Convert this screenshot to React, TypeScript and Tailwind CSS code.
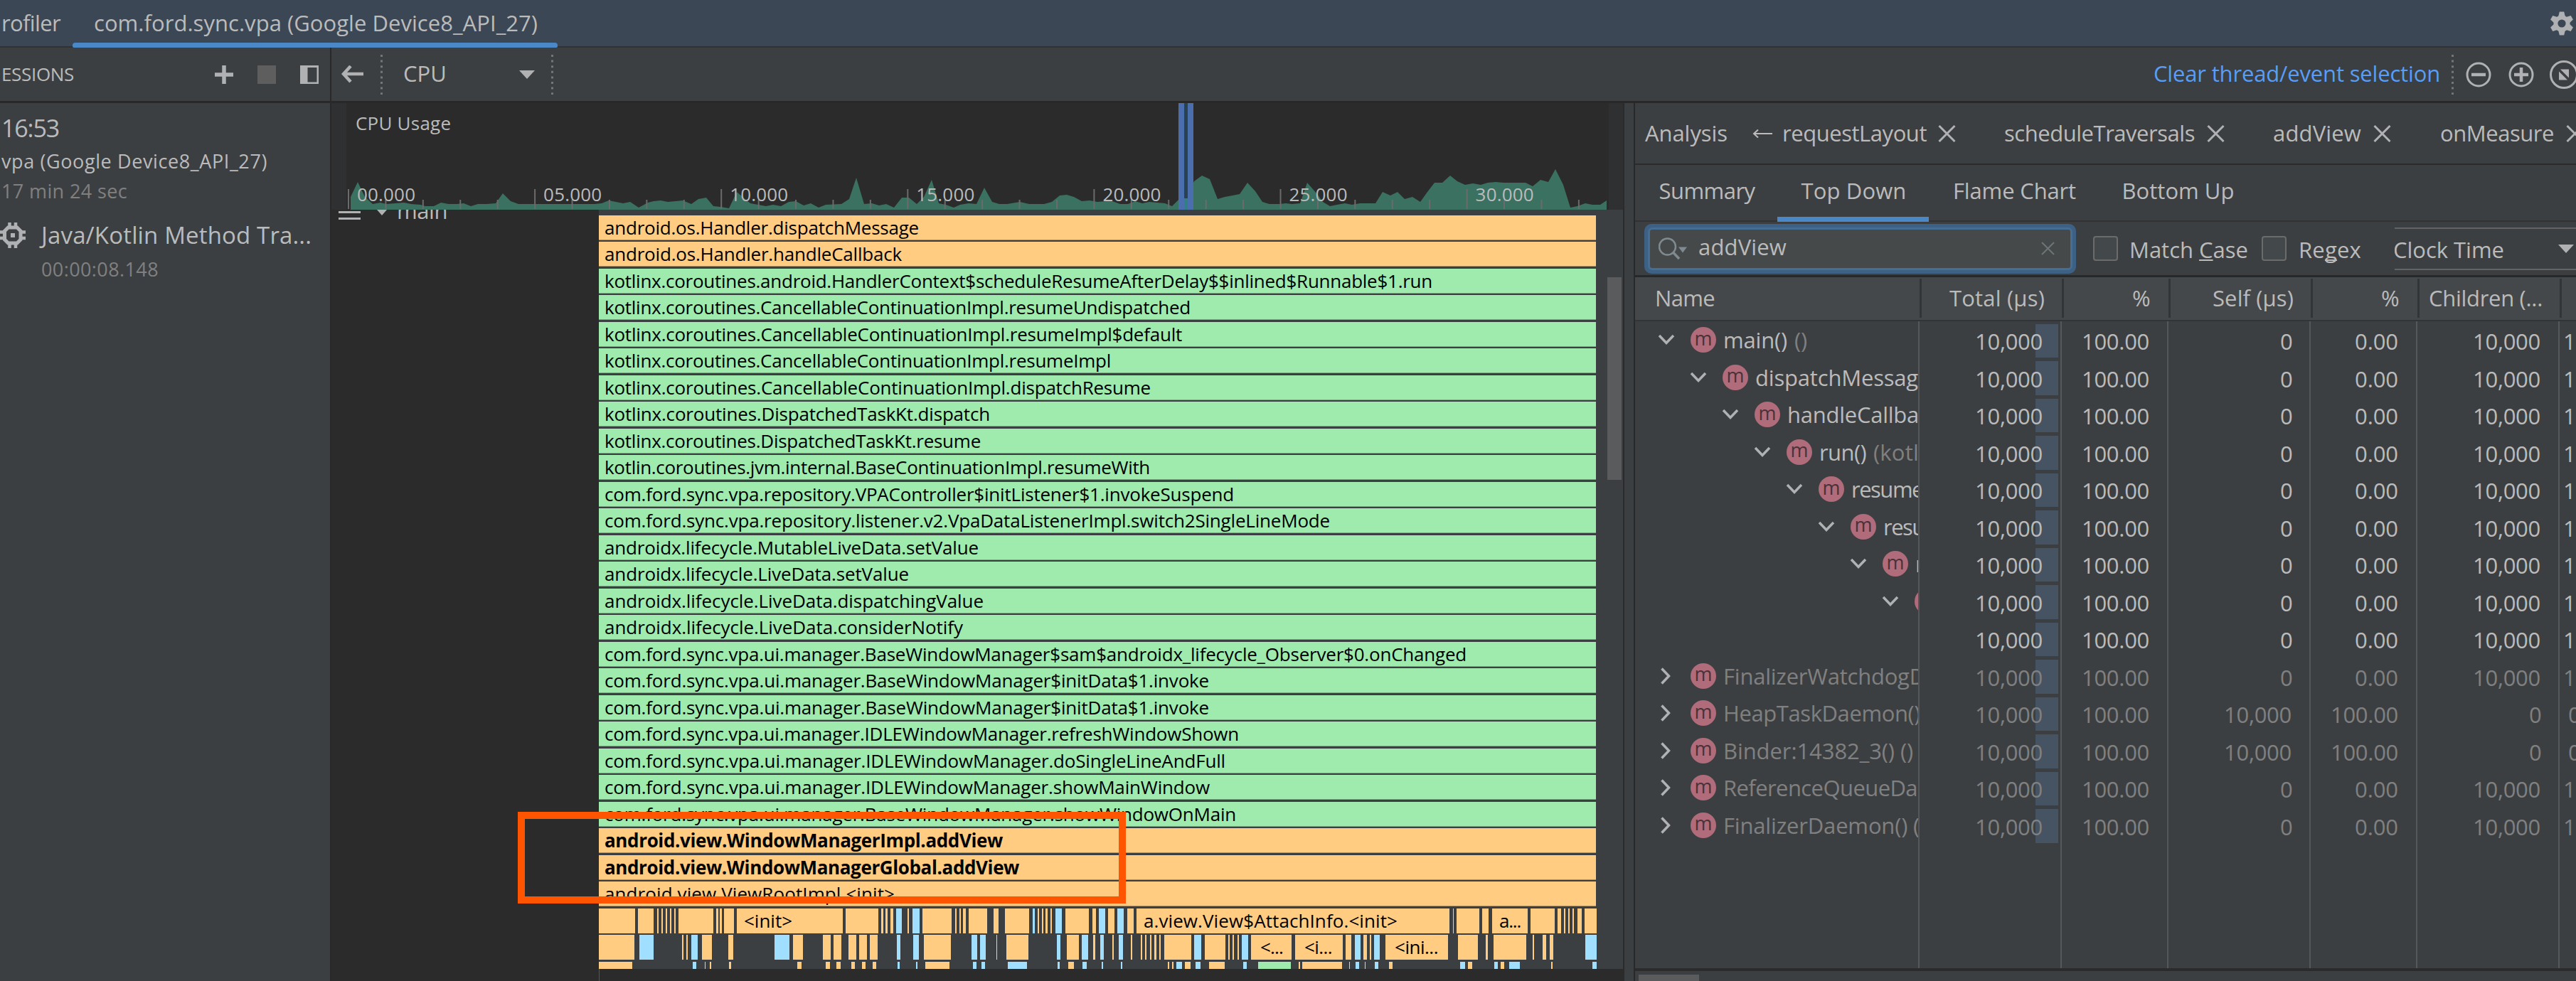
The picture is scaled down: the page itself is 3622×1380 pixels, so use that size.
import React, { useLayoutEffect, useRef } from "react";

interface FitTextProps {
  width: number;
  className?: string;
  children: React.ReactNode;
}

// Single line of text tracked so that it takes exactly `width` pixels
const FitText = ({ width, className = "", children }: FitTextProps) => {
  const ref = useRef<HTMLSpanElement>(null);

  useLayoutEffect(() => {
    const el = ref.current;
    if (!el) return;
    el.style.letterSpacing = "0px";
    const natural = el.getBoundingClientRect().width;
    const count = el.textContent?.length || 1;
    el.style.letterSpacing = `${(width - 2 - natural) / count}px`;
  }, [width, children]);

  return (
    <div className={`shrink-0 whitespace-pre ${className}`} style={{ width }}>
      <span ref={ref} className="ml-0.5 inline-block">
        {children}
      </span>
    </div>
  );
};

/* ---------- icons ---------- */

const CloseIcon = ({ className = "" }: { className?: string }) => (
  <svg viewBox="0 0 25 24" className={`h-6 w-[25px] shrink-0 ${className}`}>
    <path d="M1.5 1L23.5 23M23.5 1L1.5 23" stroke="#afb1b3" strokeWidth="3" />
  </svg>
);

const DottedDivider = ({ className = "" }: { className?: string }) => (
  <svg viewBox="0 0 3 56" className={`h-14 w-[3px] shrink-0 ${className}`}>
    <path d="M1.5 0V56" stroke="#747678" strokeWidth="3" strokeDasharray="3 4.6" />
  </svg>
);

const Triangle = ({ className = "" }: { className?: string }) => (
  <svg viewBox="0 0 22 12" className={`h-3 w-[22px] shrink-0 ${className}`}>
    <path d="M0 0H22L11 12Z" fill="#afb1b3" />
  </svg>
);

const GearIcon = () => (
  <svg viewBox="-17 -17 34 34" className="ml-auto mr-[3px] h-[34px] w-[34px] shrink-0">
    <g fill="#afb1b3">
      {[0, 60, 120].map((a) => (
        <path key={a} d="M-3.2 -16.5H3.2L5 -9V9L3.2 16.5H-3.2L-5 9V-9Z" transform={`rotate(${a})`} />
      ))}
      <circle r="11.5" />
    </g>
    <circle r="5.6" fill="#3c4755" />
  </svg>
);

const ChipIcon = () => (
  <svg viewBox="0 0 36 36" className="h-9 w-9 shrink-0">
    <g fill="none" stroke="#afb1b3">
      <path d="M13.500 0V8M22 0V8M13.500 28V36M22 28V36M28 13.500H36M28 22H36M0 13.500H8M0 22H8" strokeWidth="4.500" />
      <path d="M11.500 7H24L29 12V24L24 29H11.500L6.500 24V12Z" strokeWidth="5" />
    </g>
    <rect x="15" y="15" width="6" height="6" fill="#afb1b3" />
  </svg>
);

const MethodIcon = () => (
  <div className="flex h-9 w-9 shrink-0 items-center justify-center rounded-full bg-[#b06c7a] pb-1.5 text-[27px] leading-none text-[#4a3238]">
    m
  </div>
);

const Chevron = ({ open }: { open: boolean }) => (
  <svg viewBox="0 0 24 24" className="h-6 w-6 shrink-0">
    <path
      d={open ? "M2 6L12 16.500L22 6" : "M5.500 1.500L15.500 12L5.500 22.500"}
      fill="none"
      stroke="#afb1b3"
      strokeWidth="3.500"
    />
  </svg>
);

/* ---------- sessions ---------- */

const Sessions = () => (
  <div className="flex w-[466px] shrink-0 flex-col border-r-2 border-[#292929] bg-[#3c3f41]">
    <div className="flex h-[78px] items-center border-b-[3px] border-[#282828]">
      <FitText width={104} className="text-[26px]">ESSIONS</FitText>
      <svg viewBox="0 0 26 26" className="ml-[198px] size-[26px]">
        <path d="M13 0V26M0 13H26" stroke="#afb1b3" strokeWidth="5.500" />
      </svg>
      <div className="ml-[34px] size-[26px] bg-[#5e5e5e]" />
      <svg viewBox="0 0 26 26" className="ml-[34px] size-[26px]">
        <path d="M0 0H26V26H0ZM10.500 3V23.500H23.500V3Z" fill="#afb1b3" fillRule="evenodd" />
      </svg>
    </div>
    <div className="pt-[15px]">
      <FitText width={83} className="text-[34px] leading-10">16:53</FitText>
      <FitText width={376} className="mt-[9px] text-[27px] leading-9">vpa (Google Device8_API_27)</FitText>
      <FitText width={179} className="mt-1.5 text-[27px] leading-9 text-[#808080]">17 min 24 sec</FitText>
      <div className="mt-[23px] flex h-[42px] items-center">
        <ChipIcon />
        <FitText width={382} className="ml-5 text-[33px]">Java/Kotlin Method Tra...</FitText>
      </div>
      <FitText width={167} className="ml-[56px] mt-[9px] text-[27px] leading-9 text-[#808080]">
        00:00:08.148
      </FitText>
    </div>
  </div>
);

/* ---------- cpu usage chart ---------- */

const usage =
  "493,277 503,256 513,277 524,287 535,285 543,287 568,285 578,287 591,288 598,290 610,290 620,285 631,287 642,287 652,286 662,290 672,287 684,287 697,286 707,272 718,283 729,287 836,287 846,286 856,282 866,284 876,286 886,284 898,292 911,285 919,283 929,282 939,284 960,282 972,287 982,280 993,278 1003,290 1013,291 1025,293 1036,270 1044,277 1055,286 1066,288 1077,290 1087,288 1098,290 1109,284 1119,283 1130,289 1140,286 1151,292 1161,288 1183,287 1194,280 1204,250 1215,287 1226,286 1236,289 1246,287 1257,292 1268,278 1278,278 1289,287 1299,277 1310,253 1320,286 1330,288 1341,292 1350,288 1362,286 1373,287 1384,264 1395,284 1405,287 1416,287 1434,284 1447,287 1468,287 1479,284 1490,275 1500,274 1510,277 1521,283 1532,282 1543,284 1555,283 1564,283 1575,287 1586,287 1596,283 1606,286 1616,284 1638,286 1648,290 1658,280 1668,278 1679,255 1690,247 1701,252 1712,280 1722,277 1733,275 1743,273 1754,257 1765,269 1775,284 1785,287 1799,287 1808,286 1817,287 1828,286 1838,257 1852,273 1860,284 1870,290 1880,288 1891,286 1901,288 1912,286 1934,286 1944,270 1955,275 1965,270 1975,280 1986,277 1997,284 2007,270 2017,257 2028,257 2039,247 2049,255 2060,260 2071,258 2082,260 2092,257 2103,256 2114,257 2145,257 2155,262 2166,253 2177,256 2187,238 2198,260 2208,292 2218,290 2229,286 2239,288 2250,288 2259,282";

const seconds = ["00.000", "05.000", "10.000", "15.000", "20.000", "25.000", "30.000"];

const CpuUsage = () => (
  <div className="flex h-[150px] bg-[#2b2b2b]">
    <div className="w-[21px] bg-[#2f3032]" />
    <svg viewBox="487 145 1775 150" className="h-[150px] w-[1775px]">
      <polygon points={`493,295 ${usage} 2259,295`} fill="#3b7160" />
      {Array.from({ length: 34 }, (_, i) => (
        <rect key={i} x={489 + i * 52.42} y={i % 5 ? 281 : 266} width="2" height={i % 5 ? 13 : 28} fill="#6b6b6b" />
      ))}
      <g fill="#bbbbbb" fontSize="26">
        <text x="500" y="182.500" textLength="134">CPU Usage</text>
        {seconds.map((s, i) => (
          <text key={s} x={502 + i * 262.1} y="283" textLength="82">{s}</text>
        ))}
      </g>
      <rect x="1657" y="145" width="21" height="150" fill="#4b6eaf" />
      <rect x="1665" y="145" width="5" height="134" fill="#29434e" />
      <rect x="1665" y="279" width="5" height="16" fill="#327f86" />
    </svg>
    <div className="w-5 bg-[#2f3032]" />
  </div>
);

/* ---------- call chart ---------- */

const calls: [string, number, string?][] = [
  ["android.os.Handler.dispatchMessage", 443, "o"],
  ["android.os.Handler.handleCallback", 419, "o"],
  ["kotlinx.coroutines.android.HandlerContext$scheduleResumeAfterDelay$$inlined$Runnable$1.run", 1165],
  ["kotlinx.coroutines.CancellableContinuationImpl.resumeUndispatched", 825],
  ["kotlinx.coroutines.CancellableContinuationImpl.resumeImpl$default", 813],
  ["kotlinx.coroutines.CancellableContinuationImpl.resumeImpl", 713],
  ["kotlinx.coroutines.CancellableContinuationImpl.dispatchResume", 769],
  ["kotlinx.coroutines.DispatchedTaskKt.dispatch", 543],
  ["kotlinx.coroutines.DispatchedTaskKt.resume", 530],
  ["kotlin.coroutines.jvm.internal.BaseContinuationImpl.resumeWith", 768],
  ["com.ford.sync.vpa.repository.VPAController$initListener$1.invokeSuspend", 886],
  ["com.ford.sync.vpa.repository.listener.v2.VpaDataListenerImpl.switch2SingleLineMode", 1021],
  ["androidx.lifecycle.MutableLiveData.setValue", 527],
  ["androidx.lifecycle.LiveData.setValue", 429],
  ["androidx.lifecycle.LiveData.dispatchingValue", 534],
  ["androidx.lifecycle.LiveData.considerNotify", 505],
  ["com.ford.sync.vpa.ui.manager.BaseWindowManager$sam$androidx_lifecycle_Observer$0.onChanged", 1213],
  ["com.ford.sync.vpa.ui.manager.BaseWindowManager$initData$1.invoke", 851],
  ["com.ford.sync.vpa.ui.manager.BaseWindowManager$initData$1.invoke", 851],
  ["com.ford.sync.vpa.ui.manager.IDLEWindowManager.refreshWindowShown", 893],
  ["com.ford.sync.vpa.ui.manager.IDLEWindowManager.doSingleLineAndFull", 874],
  ["com.ford.sync.vpa.ui.manager.IDLEWindowManager.showMainWindow", 852],
  ["com.ford.sync.vpa.ui.manager.BaseWindowManager.showWindowOnMain", 889],
  ["android.view.WindowManagerImpl.addView", 561, "b"],
  ["android.view.WindowManagerGlobal.addView", 584, "b"],
  ["android.view.ViewRootImpl.<init>", 409, "o"],
];

const callStyle: Record<string, string> = {
  g: "border-[#79a883] bg-[#9eebad]",
  o: "border-[#ad9168] bg-[#ffcc82]",
  b: "border-[#ad9168] bg-[#ffcc82] font-bold",
};

type Segment = [left: number, width: number, kind?: string, label?: string, labelWidth?: number];

const segments: Segment[][] = [
  [
    [0, 51], [55, 22], [82, 2], [88, 2], [94, 2], [100, 2], [106, 2], [112, 49], [165, 3], [170, 3], [176, 14],
    [194, 149, "o", "<init>", 70], [347, 46], [397, 3], [403, 3], [410, 4], [418, 8, "s"], [434, 2], [441, 10, "s"],
    [455, 41], [501, 2], [507, 2], [512, 4], [520, 26], [555, 7], [571, 34], [610, 3, "s"], [617, 2], [623, 2],
    [628, 3], [635, 2], [642, 9, "s"], [656, 33], [694, 5], [703, 9, "s"], [716, 9], [729, 9, "s"], [743, 9],
    [756, 440, "o", "a.view.View$AttachInfo.<init>", 359], [1201, 1], [1206, 32], [1242, 9],
    [1256, 50, "o", "a...", 32], [1310, 34], [1348, 5], [1357, 2], [1363, 2], [1369, 2], [1376, 6], [1386, 17],
  ],
  [
    [0, 50], [57, 20, "s"], [117, 2], [123, 2], [130, 9, "s"], [145, 14], [182, 7], [247, 21, "s"], [273, 14],
    [315, 11], [330, 11], [351, 11], [366, 11], [381, 11], [419, 5, "s"], [442, 8, "s"], [457, 38], [524, 8, "s"],
    [536, 8, "s"], [559, 1], [573, 31], [644, 5, "s"], [658, 17], [679, 9, "s"], [695, 3], [705, 5, "s"], [722, 2],
    [731, 6, "s"], [748, 2], [762, 2], [768, 2], [775, 2], [781, 3], [788, 2], [795, 38], [837, 10, "s"], [852, 29],
    [885, 2], [891, 2], [898, 2], [904, 9, "s"], [917, 57, "o", "<...", 34], [979, 67, "o", "<i...", 41],
    [1050, 8], [1063, 8, "s"], [1075, 5], [1084, 2], [1090, 8, "s"], [1106, 88, "o", "<ini...", 63], [1208, 28],
    [1247, 3], [1258, 46], [1313, 2], [1327, 5], [1337, 5], [1387, 16, "s"],
  ],
  [
    [0, 47], [132, 5, "s"], [149, 1], [156, 2], [183, 3], [279, 6], [319, 6], [334, 6], [355, 5], [370, 5], [385, 5],
    [420, 3, "s"], [446, 2, "s"], [459, 34], [526, 5, "s"], [538, 5, "s"], [575, 27, "s"], [645, 3, "s"], [660, 8],
    [680, 6, "s"], [707, 2, "s"], [734, 2, "s"], [800, 2], [806, 2], [812, 8, "s"], [824, 8], [839, 7, "s"],
    [858, 22], [906, 5, "s"], [927, 46, "g"], [984, 2], [989, 56], [1055, 1], [1064, 5, "s"], [1077, 1],
    [1091, 5, "s"], [1111, 5], [1211, 7, "s"], [1222, 6], [1259, 5, "s"], [1268, 5], [1280, 15, "s"], [1339, 2],
    [1397, 6, "s"],
  ],
];

const segmentStyle: Record<string, string> = {
  o: "bg-[#ffcc82]",
  s: "bg-[#a0dfff]",
  g: "bg-[#9eebad]",
};

const CallChart = () => (
  <div className="flex h-[1068px] overflow-hidden bg-[#3c3f41]">
    <div className="flex w-[376px] shrink-0 bg-[#2b2b2b]">
      <div className="ml-2.5 mt-0.5 h-3 w-[31px] border-y-[3px] border-[#afb1b3]" />
      <svg viewBox="0 0 14 8" className="ml-[23px] h-2 w-3.5">
        <path d="M0 0H14L7 8Z" fill="#afb1b3" />
      </svg>
      <div className="ml-3 h-5 overflow-hidden">
        <FitText width={73} className="-mt-[21px] text-[31px] leading-[44px]">main</FitText>
      </div>
    </div>
    <div className="w-[1402px] shrink-0 pt-[7.5px] text-[26px] text-black">
      {calls.map(([name, width, kind = "g"], i) => (
        <div key={i} className="h-[37.5px]">
          <div className={`h-[35px] border-b pl-1.5 leading-[34px] ${callStyle[kind]}`}>
            <FitText width={width + 1}>{name}</FitText>
          </div>
        </div>
      ))}
      {segments.map((row, i) => (
        <div key={i} className="relative h-[37.5px]">
          {row.map(([left, width, kind = "o", label, labelWidth = 0]) => (
            <div
              key={left}
              className={`absolute top-0 flex h-[35px] justify-start leading-[34px] ${segmentStyle[kind]}`}
              style={{ left, width }}
            >
              {label && (
                <FitText width={labelWidth} className={i === 0 ? "ml-2" : "ml-[11px]"}>{label}</FitText>
              )}
            </div>
          ))}
        </div>
      ))}
    </div>
    <div className="ml-4 mt-[95px] h-[285px] w-5 bg-[#595b5d]" />
  </div>
);

/* ---------- analysis ---------- */

const Filter = () => (
  <div className="flex h-[78px] shrink-0 items-center border-b-[3px] border-[#282828]">
    <div className="ml-[13px] h-[70px] w-[607px] shrink-0 rounded-[10px] border-[5px] border-[#3d6185] bg-[#3d6185]">
      <div className="flex h-[60px] items-center rounded-[6px] border-[3px] border-[#466d94] bg-[#45494a] pl-3">
        <svg viewBox="0 0 42 32" className="h-8 w-[42px] shrink-0">
          <circle cx="12.500" cy="13" r="11.500" fill="none" stroke="#7f8b91" strokeWidth="2.500" />
          <path d="M20 20.500L29 30" stroke="#7f8b91" strokeWidth="3.500" />
          <path d="M28 13.500H40L34 21.500Z" fill="#7f8b91" />
        </svg>
        <FitText width={126} className="ml-3 pb-1">addView</FitText>
        <svg viewBox="0 0 19 19" className="ml-auto mr-[22px] size-[19px]">
          <path d="M1 1L18 18M18 1L1 18" stroke="#6d7578" strokeWidth="2" />
        </svg>
      </div>
    </div>
    <div className="ml-6 size-[35px] shrink-0 rounded-[4px] border-2 border-[#6b6b6b] bg-[#43494a]" />
    <FitText width={169} className="ml-3.5 pt-[3px]">
      Match <span className="underline decoration-2 underline-offset-2">C</span>ase
    </FitText>
    <div className="ml-[19px] size-[35px] shrink-0 rounded-[4px] border-2 border-[#6b6b6b] bg-[#43494a]" />
    <FitText width={90} className="ml-[15px] pt-[3px]">
      Re<span className="underline decoration-2 underline-offset-2 [text-decoration-skip-ink:none]">g</span>ex
    </FitText>
    <div className="ml-[47px] flex h-[60px] w-[255px] shrink-0 items-center overflow-hidden border-y-2 border-[#646464]">
      <FitText width={158} className="-ml-[4px] pt-[3px]">Clock Time</FitText>
      <Triangle className="ml-[76px]" />
    </div>
  </div>
);

const headers: [string, number, string][] = [
  ["Total (µs)", 136, "w-[200px]"],
  ["%", 29, "w-[150px]"],
  ["Self (µs)", 116, "w-[200px]"],
  ["%", 29, "w-[150px]"],
  ["Children (...", 162, "w-[200px]"],
];

interface MethodNode {
  depth: number;
  name: string;
  width: number;
  detail?: string;
  detailWidth?: number;
}

const tree: (MethodNode | null)[] = [
  { depth: 0, name: "main()", width: 92, detail: "()", detailWidth: 20 },
  { depth: 1, name: "dispatchMessag", width: 231 },
  { depth: 2, name: "handleCallba", width: 187 },
  { depth: 3, name: "run()", width: 68, detail: "(kotl", detailWidth: 66 },
  { depth: 4, name: "resume", width: 103 },
  { depth: 5, name: "resum", width: 87 },
  { depth: 6, name: "re", width: 29 },
  { depth: 7, name: "", width: 0 },
  null,
];

const daemons: [string, number][] = [
  ["FinalizerWatchdogD", 286],
  ["HeapTaskDaemon()", 279],
  ["Binder:14382_3() ()", 269],
  ["ReferenceQueueDa", 275],
  ["FinalizerDaemon() (", 278],
];

const numberWidth: Record<string, number> = {
  "10,000": 97,
  "100.00": 97,
  "0.00": 63,
  "0": 18,
};

// the two threads that spend everything in themselves
const selfRows = [10, 11];

const columns: { width: string; value: string; selfValue: string; bar?: boolean }[] = [
  { width: "w-[200px]", value: "10,000", selfValue: "10,000", bar: true },
  { width: "w-[150px]", value: "100.00", selfValue: "100.00" },
  { width: "w-[200px]", value: "0", selfValue: "10,000" },
  { width: "w-[150px]", value: "0.00", selfValue: "100.00" },
  { width: "w-[200px]", value: "10,000", selfValue: "0" },
];

const rows = Array.from({ length: 14 }, (_, i) => i);

const Table = () => (
  <>
    <div className="flex h-[62px] shrink-0 border-b-2 border-[#323537] bg-[#45484a] pt-0.5">
      <div className="flex h-[55px] w-[403px] shrink-0 items-center border-r-[3px] border-[#323537] pl-[26px]">
        <FitText width={86}>Name</FitText>
      </div>
      {headers.map(([label, width, cell], i) => (
        <div
          key={i}
          className={`flex h-[55px] shrink-0 items-center justify-end border-r-[3px] border-[#323537] pr-6 ${cell}`}
        >
          <FitText width={width}>{label}</FitText>
        </div>
      ))}
    </div>
    <div className="flex h-[914px] shrink-0 border-b-4 border-[#2b2b2b]">
      <div className="w-[400px] shrink-0 overflow-hidden border-r-2 border-[#55585a] pt-px">
        {tree.map((node, i) => (
          <div key={i} className="flex h-[52.5px] items-center">
            {node && (
              <div className="flex items-center pb-0.5 pl-8" style={{ marginLeft: node.depth * 45 }}>
                <Chevron open />
                <div className="w-[22px] shrink-0" />
                <MethodIcon />
                <FitText width={node.width} className="ml-2">{node.name}</FitText>
                {node.detail && (
                  <FitText width={node.detailWidth ?? 0} className="ml-2 text-[#808080]">{node.detail}</FitText>
                )}
              </div>
            )}
          </div>
        ))}
        {daemons.map(([name, width]) => (
          <div key={name} className="flex h-[52.5px] items-center pb-0.5 pl-8 text-[#808080]">
            <Chevron open={false} />
            <div className="w-[22px] shrink-0" />
            <MethodIcon />
            <FitText width={width} className="ml-2">{name}</FitText>
          </div>
        ))}
      </div>
      {columns.map((col, c) => (
        <div key={c} className={`shrink-0 border-r-2 border-[#55585a] pt-px ${col.width}`}>
          {rows.map((r) => {
            const value = selfRows.includes(r) ? col.selfValue : col.value;
            return (
              <div
                key={r}
                className={`relative flex h-[52.5px] items-center justify-end pr-[25px] ${r > 8 ? "text-[#808080]" : ""}`}
              >
                {col.bar && <div className="absolute inset-y-[2.5px] right-[3px] w-8 bg-[#455362]" />}
                <FitText width={numberWidth[value]} className="relative pt-0.5">{value}</FitText>
              </div>
            );
          })}
        </div>
      ))}
      <div className="w-[23px] shrink-0 overflow-hidden pt-px">
        {rows.map((r) => (
          <div key={r} className={`flex h-[52.5px] items-center pt-0.5 ${r > 8 ? "text-[#808080]" : ""}`}>
            {selfRows.includes(r) ? (
              <FitText width={63} className="ml-2.5">0.00</FitText>
            ) : (
              <FitText width={97} className="ml-[3px]">100.00</FitText>
            )}
          </div>
        ))}
      </div>
    </div>
    <div className="ml-[5px] mt-[5px] h-[9px] w-[85px] bg-[#5a5b5d]" />
  </>
);

const Analysis = () => (
  <div className="flex w-[1325px] shrink-0 flex-col overflow-hidden border-l-2 border-[#292929] bg-[#3c3f41]">
    <div className="flex h-[87px] shrink-0 items-center border-b-2 border-[#2b2b2b] pl-3">
      <FitText width={118}>Analysis</FitText>
      <svg viewBox="0 0 28 12" className="ml-[35px] h-3 w-7 shrink-0">
        <path d="M28 6H2M8 0.500L2 6L8 11.500" fill="none" stroke="#bbbbbb" strokeWidth="2" />
      </svg>
      <FitText width={205} className="ml-3">requestLayout</FitText>
      <CloseIcon className="ml-4" />
      <FitText width={270} className="ml-[66px]">scheduleTraversals</FitText>
      <CloseIcon className="ml-[17px]" />
      <FitText width={126} className="ml-[66px]">addView</FitText>
      <CloseIcon className="ml-[17px]" />
      <FitText width={162} className="ml-[67px]">onMeasure</FitText>
      <CloseIcon className="ml-[17px]" />
    </div>
    <div className="flex h-20 shrink-0 border-b-2 border-[#323232]">
      <div className="flex w-[200px] items-center justify-center pb-1.5">
        <FitText width={137}>Summary</FitText>
      </div>
      <div className="relative flex w-[213px] items-center justify-center pb-1.5">
        <FitText width={150}>Top Down</FitText>
        <div className="absolute inset-x-0 -bottom-0.5 h-[7px] bg-[#4a88c7]" />
      </div>
      <div className="flex w-[239px] items-center justify-center pb-1.5">
        <FitText width={175}>Flame Chart</FitText>
      </div>
      <div className="flex w-[221px] items-center justify-center pb-1.5">
        <FitText width={160}>Bottom Up</FitText>
      </div>
    </div>
    <Filter />
    <Table />
  </div>
);

const CpuToolbar = () => (
  <div className="flex h-[78px] shrink-0 items-center border-b-[3px] border-[#282828] bg-[#3c3f41]">
    <svg viewBox="0 0 32 26" className="ml-[14px] h-[26px] w-8 shrink-0">
      <path d="M31 12H3M13 1L3 12L13 23" fill="none" stroke="#afb1b3" strokeWidth="4.500" />
    </svg>
    <DottedDivider className="ml-[23px]" />
    <FitText width={63} className="ml-[27px] pb-[3px]">CPU</FitText>
    <Triangle className="ml-[102px]" />
    <DottedDivider className="ml-[23px]" />
    <FitText width={405} className="ml-auto pb-[3px] text-[#589df6]">Clear thread/event selection</FitText>
    <DottedDivider className="ml-4" />
    <svg viewBox="0 0 36 36" className="ml-[17px] size-9 shrink-0">
      <circle cx="18" cy="18" r="16" fill="none" stroke="#afb1b3" strokeWidth="3" />
      <path d="M8 18H28" stroke="#afb1b3" strokeWidth="4.500" />
    </svg>
    <svg viewBox="0 0 36 36" className="ml-6 size-9 shrink-0">
      <circle cx="18" cy="18" r="16" fill="none" stroke="#afb1b3" strokeWidth="3" />
      <path d="M8 18H28M18 8V28" stroke="#afb1b3" strokeWidth="4.500" />
    </svg>
    <svg viewBox="0 0 40 40" className="-mr-[3px] ml-[22px] size-10 shrink-0">
      <circle cx="20" cy="20" r="18.500" fill="none" stroke="#afb1b3" strokeWidth="3" />
      <path d="M15 12.500H27V24.500ZM13 15.500L25 27.500H13Z" fill="#afb1b3" />
    </svg>
  </div>
);

const App = () => {
  return (
    <div className="relative flex h-[1380px] w-[3622px] flex-col overflow-hidden bg-[#3c3f41] font-['Open_Sans','Noto_Sans',sans-serif] text-[31px] text-[#bbbbbb]">
      <div className="flex h-[67px] shrink-0 items-center border-b-2 border-[#323232] bg-[#3c4755]">
        <FitText width={85}>rofiler</FitText>
        <div className="relative ml-[17px] flex h-[65px] w-[682px] items-center justify-center">
          <FitText width={626}>com.ford.sync.vpa (Google Device8_API_27)</FitText>
          <div className="absolute inset-x-0 -bottom-0.5 h-[7px] rounded-t-[4px] rounded-b-[2px] bg-[#4a88c7]" />
        </div>
        <GearIcon />
      </div>
      <div className="flex h-[1313px]">
        <Sessions />
        <div className="flex w-[3156px] shrink-0 flex-col">
          <CpuToolbar />
          <div className="flex h-[1235px]">
            <div className="flex w-[1818px] shrink-0 flex-col border-r-2 border-[#2b2b2b] bg-[#2b2b2b]">
              <CpuUsage />
              <CallChart />
              <div className="ml-[376px] h-[17px] w-px bg-[#555555]" />
            </div>
            <div className="w-[13px] shrink-0 bg-[#3c3f41]" />
            <Analysis />
          </div>
        </div>
      </div>
      {/* highlight around both addView frames */}
      <div className="absolute left-[728px] top-[1142px] h-[129px] w-[855px] border-[10px] border-[#ff5500]" />
    </div>
  );
};

export default App;
